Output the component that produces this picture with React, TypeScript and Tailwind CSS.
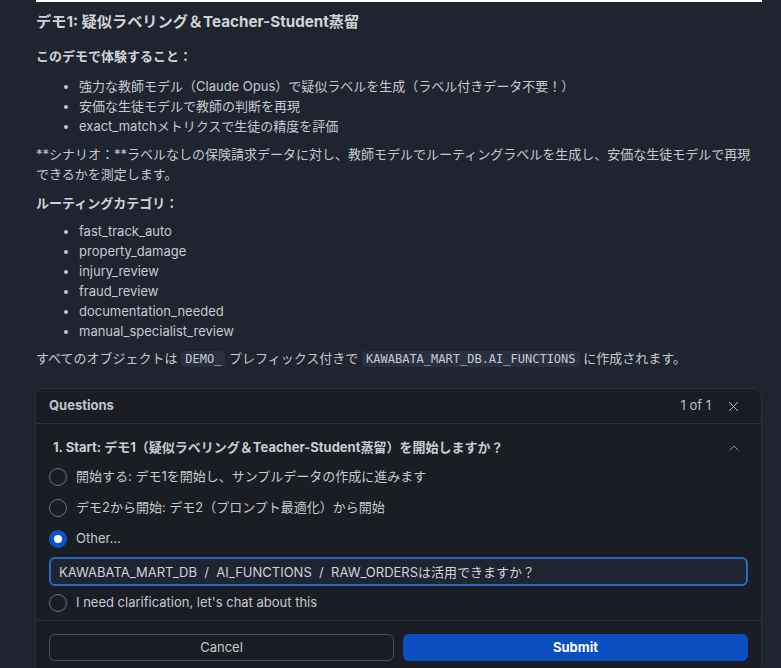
import { useState } from 'react';
import { X, ChevronUp } from 'lucide-react';

const font = { fontFamily: 'Inter, "Noto Sans CJK JP", sans-serif' };
const mono = 'font-["DejaVu_Sans_Mono",monospace]';

const goals = [
  '強力な教師モデル（Claude Opus）で疑似ラベルを生成（ラベル付きデータ不要！）',
  '安価な生徒モデルで教師の判断を再現',
  'exact_matchメトリクスで生徒の精度を評価',
];

const categories = [
  'fast_track_auto',
  'property_damage',
  'injury_review',
  'fraud_review',
  'documentation_needed',
  'manual_specialist_review',
];

const options = [
  { id: 'start', label: '開始する: デモ1を開始し、サンプルデータの作成に進みます' },
  { id: 'demo2', label: 'デモ2から開始: デモ2（プロンプト最適化）から開始' },
  { id: 'other', label: 'Other...' },
];

function Radio({ checked, onClick }: { checked: boolean; onClick: () => void }) {
  return (
    <button
      onClick={onClick}
      className={
        checked
          ? 'w-[18px] h-[18px] rounded-full bg-[#0b55c8] flex items-center justify-center shrink-0'
          : 'w-[18px] h-[18px] rounded-full border border-[#6b7180] shrink-0'
      }
    >
      {checked && <span className="w-[8px] h-[8px] rounded-full bg-white" />}
    </button>
  );
}

export default function App() {
  const [selected, setSelected] = useState('other');
  const [other, setOther] = useState('KAWABATA_MART_DB  /  AI_FUNCTIONS  /  RAW_ORDERSは活用できますか？');

  return (
    <div style={font} className="w-full h-[668px] overflow-hidden bg-[#1f2430] pl-[36px] pr-[19px] text-[13px] text-[#c6c9d0]">
      <div className="h-[2px] bg-white" />

      <h2 className="mt-[9px] text-[15.2px] leading-[22px] font-bold text-[#d0d3d9]">
        デモ1: 疑似ラベリング＆Teacher-Student蒸留
      </h2>

      <h3 className="mt-[13px] leading-[20px] font-bold text-[#d0d3d9]">このデモで体験すること：</h3>
      <ul className="mt-[10px] pl-[43px] list-disc leading-[20px]">
        {goals.map(g => (
          <li key={g}>{g}</li>
        ))}
      </ul>

      <p className="mt-[9px] leading-[19.5px]">
        **シナリオ：**ラベルなしの保険請求データに対し、教師モデルでルーティングラベルを生成し、安価な生徒モデルで再現できるかを測定します。
      </p>

      <h3 className="mt-[9px] leading-[20px] font-bold text-[#d0d3d9]">ルーティングカテゴリ：</h3>
      <ul className="mt-[8px] pl-[43px] list-disc leading-[20px]">
        {categories.map(c => (
          <li key={c}>{c}</li>
        ))}
      </ul>

      <p className="mt-[7px] leading-[20px]">
        すべてのオブジェクトは{' '}
        <code className={`${mono} text-[12px] bg-[#2a3040] rounded px-[4px] py-[1px]`}>DEMO_</code>{' '}
        プレフィックス付きで{' '}
        <code className={`${mono} text-[12px] bg-[#2a3040] rounded px-[4px] py-[1px]`}>KAWABATA_MART_DB.AI_FUNCTIONS</code>{' '}
        に作成されます。
      </p>

      <div className="mt-[19px] -ml-px border border-[#2c313c] rounded-[8px] bg-[#1a1d24]">
        <div className="h-[35px] flex items-center justify-between pl-[13px] pr-[19px] border-b border-[#2c313c]">
          <span className="font-bold text-[#c0c4cc]">Questions</span>
          <div className="flex items-center gap-[14px] text-[#b8bcc4]">
            <span>1 of 1</span>
            <X size={17} strokeWidth={1.4} />
          </div>
        </div>

        <div className="px-[13px]">
          <div className="mt-[12px] h-[24px] flex items-center justify-between pl-[4px] pr-[6px]">
            <span className="font-bold text-[#c9ccd3]">1. Start: デモ1（疑似ラベリング＆Teacher-Student蒸留）を開始しますか？</span>
            <ChevronUp size={16} strokeWidth={1.4} className="text-[#9ca1ab]" />
          </div>

          <div className="mt-[1px]">
            {options.map(o => (
              <div key={o.id} className="h-[31px] flex items-center gap-[9px]">
                <Radio checked={selected === o.id} onClick={() => setSelected(o.id)} />
                <span>{o.label}</span>
              </div>
            ))}
          </div>

          <input
            value={other}
            onChange={e => setOther(e.target.value)}
            className="mt-[3px] w-full h-[29px] rounded-[6px] border-2 border-[#2b66c4] bg-[#1f2430] px-[8px] text-[13px] text-[#d0d3d9] whitespace-pre outline-none"
            style={font}
          />

          <div className="h-[34px] flex items-center gap-[9px]">
            <Radio checked={selected === 'clarify'} onClick={() => setSelected('clarify')} />
            <span>I need clarification, let's chat about this</span>
          </div>
        </div>

        <div className="border-t border-[#2c313c] px-[13px] pt-[13px] pb-[12px] grid grid-cols-2 gap-[9px]">
          <button className="h-[27px] rounded-[6px] border border-[#4b5160] text-[#c6c9d0]">Cancel</button>
          <button className="h-[27px] rounded-[6px] bg-[#0a4ec2] text-white font-bold">Submit</button>
        </div>
      </div>
    </div>
  );
}
